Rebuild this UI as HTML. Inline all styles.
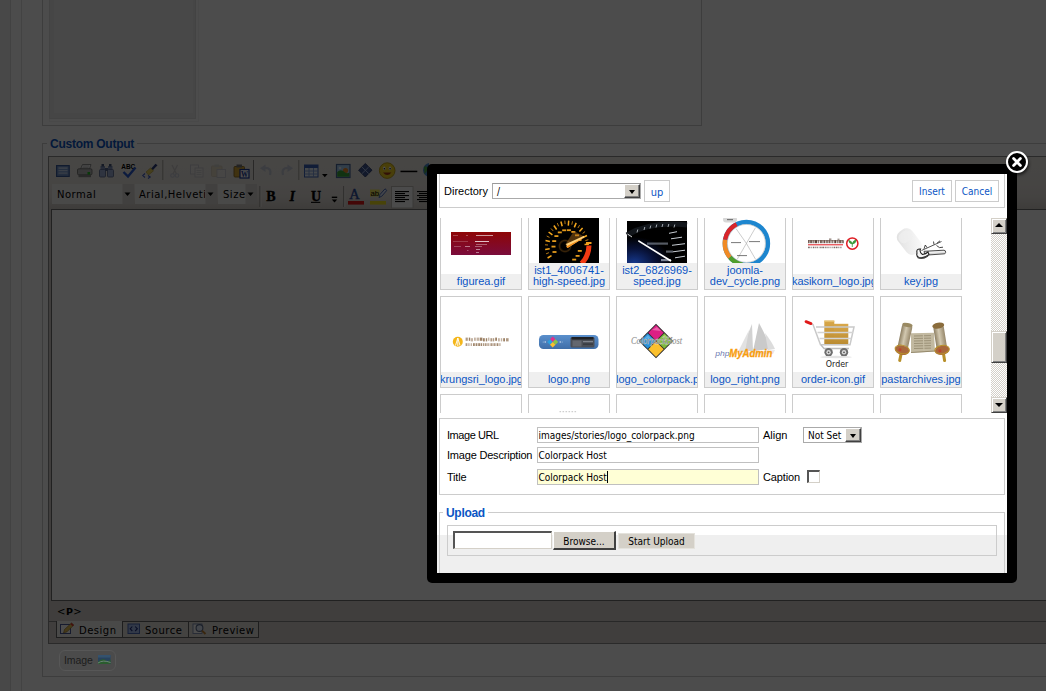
<!DOCTYPE html>
<html><head><meta charset="utf-8"><title>Custom Output</title>
<style>
html,body{margin:0;padding:0}
body{width:1046px;height:691px;overflow:hidden;background:#fff;position:relative;font-family:"Liberation Sans",Arial,sans-serif;font-size:11px;color:#333}
.a{position:absolute;box-sizing:border-box}
.tah{font-family:"DejaVu Sans Condensed","DejaVu Sans",sans-serif;font-size:10px;color:#000}
.ver{font-family:"DejaVu Sans",sans-serif;font-size:10px;letter-spacing:.5px;color:#000}
/* page under overlay */
#page{left:0;top:0;width:1046px;height:691px}
#ov{left:0;top:0;width:1046px;height:691px;background:rgba(0,0,0,.7)}
legend,.lg{color:#0b55c4;font-weight:bold;font-size:12px;background:#fff;padding:0 3px;white-space:nowrap}
/* modal */
#mb{left:427px;top:164px;width:590px;height:419px;background:#000;border-radius:5px}
#mc{left:437px;top:174px;width:570px;height:399px;background:#fff;overflow:hidden}
.fs{border:1px solid #ccc}
.btn{border:1px solid #ccc;background:#fff;color:#0b55c4;text-align:center}
.it{width:82px;height:92px;border:1px solid #ccc;background:#fff;overflow:hidden}
.it .nm{position:absolute;left:0;bottom:0;width:80px;background:#efefef;color:#0b55c4;text-align:center;font-size:11px;line-height:11px;white-space:nowrap;padding:2px 0 2px}
.inp{border:1px solid #c0c0c0;background:#fff;height:16px;line-height:16px;padding-left:.5px;white-space:nowrap}

.cb{background:#d4d0c8;border:1px solid #fff;border-right-color:#404040;border-bottom-color:#404040;box-shadow:inset -1px -1px 0 #808080}
.cb i{position:absolute;left:4px;top:5px;width:0;height:0;border-left:3.5px solid transparent;border-right:3.5px solid transparent;border-top:4px solid #000}
.wb{background:#d4d0c8;border:1px solid #fff;border-right:2px solid #404040;border-bottom:2px solid #404040}
#cl{left:1006px;top:151px;width:22px;height:22px;border-radius:11px;background:#000;border:2px solid #fff;box-shadow:1px 2px 3px rgba(0,0,0,.6)}

.sbb{background:#d4d0c8;border:1px solid #d4d0c8;border-right-color:#404040;border-bottom-color:#404040;box-shadow:inset 1px 1px 0 #fff,inset -1px -1px 0 #808080}
.sbb i{position:absolute;left:3px;width:0;height:0;border-left:4px solid transparent;border-right:4px solid transparent}
.sbb i.up{top:4px;border-bottom:4px solid #000}
.sbb i.dn{top:5px;border-top:4px solid #000}
</style></head><body>
<div id="page" class="a">
  <!-- left stripes -->
  <div class="a" style="left:0;top:0;width:10px;height:691px;background:#f0f0f0"></div>
  <div class="a" style="left:10px;top:0;width:1px;height:691px;background:#dcdcdc"></div>
  <div class="a" style="left:21px;top:0;width:1px;height:691px;background:#e2e2e2"></div>
  <!-- fieldset 1 -->
  <div class="a" style="left:42px;top:-10px;width:660px;height:136px;border:1px solid #ccc"></div>
  <div class="a" style="left:49px;top:-10px;width:150px;height:132px;border:1px solid #f4f4f4;background:#fdfdfd"></div>
  <div class="a" style="left:49px;top:-10px;width:147px;height:129px;border:1px solid #e2e2e2;background:#eaeaea"></div>
  <div class="a" style="left:54px;top:-10px;width:139px;height:123px;background:#f0f0f0"></div>
  <!-- fieldset 2 -->
  <div class="a" style="left:42px;top:143px;width:1100px;height:534px;border:1px solid #ccc"></div>
  <div class="a lg" style="left:47px;top:137px;height:14px;line-height:14px;letter-spacing:-.25px">Custom Output</div>

  <!-- editor -->
  <div class="a" style="left:48px;top:156px;width:1100px;height:488px;border:1px solid #8c8c8c;background:#d5d0cb"></div>
  <div class="a" style="left:51px;top:209px;width:1100px;height:392px;border:1px solid #6e6e6e;background:#fff"></div>
  <div class="a" style="left:49px;top:621px;width:1100px;height:1px;background:#888"></div>
  <div class="a" style="left:49px;top:601px;width:1100px;height:20px;background:#d5d0cb"></div>
  <div class="a" style="left:57px;top:605px;font:10px 'DejaVu Sans',sans-serif;color:#000;letter-spacing:.5px;line-height:13px">&lt;<b style="font-size:9.5px">P</b>&gt;</div>
  <!-- tabs -->
  <div class="a ver" style="left:56px;top:621px;width:67px;height:17px;border:1px solid #666;border-top:none;background:#f6f4f1;line-height:19px;padding-left:22px">Design</div>
  <div class="a ver" style="left:122px;top:621px;width:67px;height:17px;border:1px solid #666;background:#e3dfda;line-height:17px;padding-left:22px">Source</div>
  <div class="a ver" style="left:188px;top:621px;width:71px;height:17px;border:1px solid #666;background:#e3dfda;line-height:17px;padding-left:23px">Preview</div>
  <svg class="a" style="left:56px;top:621px" width="210" height="18" viewBox="56 621 210 18">
  <rect x="60.5" y="624.5" width="10" height="9" fill="#fdfdfd" stroke="#4a5a9a" stroke-width="1"/><path d="M63.5 633 L64.5 629.5 L71.5 623 L73.8 625 L67 631.8 Z" fill="#e8c050" stroke="#8a6a20" stroke-width=".6"/><path d="M71.5 623 L73.8 625 L72.6 626.2 L70.4 624.1 Z" fill="#e03030"/>
  <rect x="128" y="624" width="11.5" height="9.5" fill="#a8c0f0" stroke="#4a6ab8" stroke-width="1"/><path d="M132.3 626.5 L130.2 628.8 L132.3 631 M135.2 626.5 L137.3 628.8 L135.2 631" fill="none" stroke="#1a2a7a" stroke-width="1.1"/>
  <rect x="193" y="624" width="9" height="9.5" fill="#fdfdfd" stroke="#7a8ab0" stroke-width=".9"/><circle cx="199.5" cy="628" r="3.4" fill="#dfeafc" stroke="#5a6a8a" stroke-width="1.1"/><path d="M202 630.6 L205.5 634" stroke="#c08030" stroke-width="2"/>
  </svg>
  <div class="a" style="left:49px;top:157px;width:1100px;height:52px;background:linear-gradient(#eeeae5 0,#ebe7e2 26px,#e4dfda 40px,#cfcac4 52px)"></div>
  <!-- toolbar dropdowns -->
  <div class="a ver" style="left:52px;top:184px;width:82px;height:20px;background:#f6f4f1;line-height:22px;padding-left:5px">Normal</div>
  <div class="a" style="left:122px;top:184px;width:12px;height:20px;background:#dad7d3;border-left:1px solid #e8e5e1"></div>
  <div class="a ver" style="left:135px;top:184px;width:82px;height:20px;background:#f6f4f1;line-height:22px;padding-left:4px">Arial,Helveti</div>
  <div class="a" style="left:205px;top:184px;width:12px;height:20px;background:#dad7d3;border-left:1px solid #e8e5e1"></div>
  <div class="a ver" style="left:218px;top:184px;width:39px;height:20px;background:#f6f4f1;line-height:22px;padding-left:5px">Size</div>
  <div class="a" style="left:245px;top:184px;width:12px;height:20px;background:#dad7d3;border-left:1px solid #e8e5e1"></div>
  <!-- toolbar icons -->
  <svg class="a" id="tb" style="left:49px;top:157px" width="380" height="52" viewBox="49 157 380 52"><rect x="56.6" y="165.6" width="12.6" height="10.8" fill="#7a9ad0" stroke="#3a5a9a" stroke-width="1.2"/><rect x="58.5" y="167.5" width="9" height="1.2" fill="#dbe6f6"/><rect x="58.5" y="170" width="9" height="1.2" fill="#c4d4ee"/><rect x="58.5" y="172.5" width="9" height="1.2" fill="#c4d4ee"/><path d="M80.5 169 L82.5 164.5 L91 164.5 L89.5 169 Z" fill="#f4f4f4" stroke="#7a7a7a" stroke-width=".8"/><rect x="77.5" y="168.8" width="14.5" height="6" rx="1.2" fill="#b8b8b8" stroke="#6a6a6a" stroke-width=".8"/><rect x="78.5" y="174" width="12.5" height="3.2" fill="#8a8a8a"/><rect x="87.5" y="172" width="2.6" height="2.6" fill="#22c022"/><path d="M83 166 L89 166 M82.5 167.5 L88.5 167.5" stroke="#aaa" stroke-width=".6"/><rect x="100.5" y="166" width="4.5" height="4" fill="#8092ba"/><rect x="108" y="166" width="4.5" height="4" fill="#8092ba"/><rect x="101.5" y="164" width="2.5" height="2.5" fill="#45557a"/><rect x="109" y="164" width="2.5" height="2.5" fill="#45557a"/><rect x="99.5" y="169.5" width="6" height="7.5" rx="1" fill="#9fb0d6" stroke="#55658a" stroke-width=".8"/><rect x="107.5" y="169.5" width="6" height="7.5" rx="1" fill="#9fb0d6" stroke="#55658a" stroke-width=".8"/><rect x="105" y="168" width="3" height="3" fill="#55668c"/><text x="121.3" y="169.3" font-family="Liberation Sans,sans-serif" font-size="6.5" font-weight="bold" fill="#000" textLength="14" lengthAdjust="spacingAndGlyphs">ABC</text><path d="M123.5 172 L128 176.5 L135.5 167.5" fill="none" stroke="#2a5ad0" stroke-width="2.4"/><path d="M155.5 163.8 L157.5 165.2 L152.5 170.5 L150.8 169 Z" fill="#2a3a7a"/><path d="M150.5 168 L153.5 170.8 L148.5 175 L146 172 Z" fill="#e8d060" stroke="#b09a30" stroke-width=".6"/><path d="M145 173.5 L142.8 175.5 L145 177.5 M148 175.5 L150.2 177 L148 178.5" fill="none" stroke="#3a5ac0" stroke-width="1.1"/><rect x="162.5" y="160" width="1" height="20" fill="#8a8782"/><rect x="163.5" y="160" width="1" height="20" fill="#efece8"/><g opacity=".2"><path d="M172 165 L176.5 174 M177.5 165 L173 174" stroke="#556" stroke-width="1.2"/><circle cx="172.5" cy="175.5" r="1.8" fill="none" stroke="#3a5ab0" stroke-width="1.1"/><circle cx="177" cy="175.5" r="1.8" fill="none" stroke="#3a5ab0" stroke-width="1.1"/><rect x="190.5" y="165" width="8" height="9" fill="#fff" stroke="#4a5a8a" stroke-width=".9"/><rect x="195" y="168" width="8" height="9" fill="#fff" stroke="#4a5a8a" stroke-width=".9"/><path d="M196.5 170.5 H201.5 M196.5 172.5 H201.5 M196.5 174.5 H201.5" stroke="#4a5a8a" stroke-width=".7"/><rect x="211.5" y="166" width="10.5" height="10.5" rx="1" fill="#d8b050" stroke="#8a6a20" stroke-width=".9"/><rect x="214.5" y="164.5" width="4.5" height="2.5" fill="#888"/><rect x="217" y="169.5" width="8.5" height="8" fill="#fff" stroke="#4a5a8a" stroke-width=".9"/><path d="M270 175 Q272 167.5 264.5 168" fill="none" stroke="#3a5ab0" stroke-width="2.2"/><path d="M265.5 164.5 L260 168.2 L265.5 172 Z" fill="#3a5ab0"/><path d="M283 175 Q281 167.5 288.5 168" fill="none" stroke="#3a5ab0" stroke-width="2.2"/><path d="M287.5 164.5 L293 168.2 L287.5 172 Z" fill="#3a5ab0"/></g><rect x="234" y="166.5" width="10.5" height="10.5" rx="1" fill="#d8a838" stroke="#8a6a20" stroke-width=".9"/><rect x="236.5" y="164.5" width="5.5" height="3" fill="#777"/><rect x="240" y="169.5" width="9" height="8.5" fill="#fff" stroke="#1a3a9a" stroke-width="1.2"/><text x="241" y="177" font-family="Liberation Serif,serif" font-weight="bold" font-size="8" fill="#1a3a9a" textLength="7" lengthAdjust="spacingAndGlyphs">W</text><rect x="253" y="160" width="1" height="20" fill="#8a8782"/><rect x="254" y="160" width="1" height="20" fill="#efece8"/><rect x="298.5" y="160" width="1" height="20" fill="#8a8782"/><rect x="299.5" y="160" width="1" height="20" fill="#efece8"/><rect x="304.5" y="165" width="13.5" height="12" fill="#e8f0fc" stroke="#3a62b8" stroke-width="1"/><rect x="304.5" y="165" width="13.5" height="3" fill="#3a62b8"/><path d="M309 168 V177 M313.5 168 V177 M304.5 171 H318 M304.5 174 H318" stroke="#7a9ad8" stroke-width=".9"/><path d="M322 174 L327.6 174 L324.8 177.2 Z" fill="#000"/><rect x="336.5" y="164.5" width="13.5" height="13" fill="#a8d0f4" stroke="#4a6a9a" stroke-width="1.2"/><circle cx="345.5" cy="170.5" r="2.6" fill="#f08a2a"/><path d="M337.2 176.8 L337.2 172 Q341 168.5 345 172.5 Q347.5 174 349.4 172.5 L349.4 176.8 Z" fill="#3aa83a"/><circle cx="340" cy="168" r="1.3" fill="#fff" opacity=".8"/><path d="M365.3 163.5 L372 170.2 L365.3 177 L358.6 170.2 Z" fill="#3f5590" stroke="#2a3a6a" stroke-width=".9"/><path d="M362 167 L368.7 173.6 M368.7 167 L362 173.6" stroke="#b0c4ec" stroke-width=".9"/><circle cx="387.2" cy="170.6" r="7.8" fill="#f4d424" stroke="#b89a10" stroke-width=".9"/><ellipse cx="384.3" cy="168.3" rx="1.3" ry="1.9" fill="#fff"/><ellipse cx="390" cy="168.3" rx="1.3" ry="1.9" fill="#fff"/><circle cx="384.4" cy="168.8" r=".8" fill="#222"/><circle cx="390.1" cy="168.8" r=".8" fill="#222"/><path d="M383 172.5 Q387.2 177.5 391.5 172.5 Z" fill="#a8381a"/><rect x="400.5" y="170.7" width="16.8" height="1.5" fill="#000"/><circle cx="430" cy="170" r="7" fill="#4a8ad0"/><path d="M424 167 Q427 165 428 169 Q426 173 424.5 174" fill="#4aa84a"/><rect x="259.5" y="186" width="1" height="21" fill="#8a8782"/><rect x="260.5" y="186" width="1" height="21" fill="#efece8"/><text x="266.3" y="200.6" font-family="Liberation Serif,serif" font-weight="bold" font-size="14" fill="#000" stroke="#000" stroke-width=".35">B</text><text x="289.6" y="200.6" font-family="Liberation Serif,serif" font-weight="bold" font-style="italic" font-size="14" fill="#000" stroke="#000" stroke-width=".35">I</text><text x="311" y="200.6" font-family="Liberation Serif,serif" font-weight="bold" font-size="14" fill="#000" stroke="#000" stroke-width=".35">U</text><rect x="311" y="201.8" width="9.3" height="1.1" fill="#000"/><rect x="331.8" y="196.6" width="5.4" height="1.4" fill="#000"/><path d="M331.8 199.4 L337.2 199.4 L334.5 202.6 Z" fill="#000"/><rect x="343.3" y="186" width="1" height="21" fill="#8a8782"/><rect x="344.3" y="186" width="1" height="21" fill="#efece8"/><text x="349.2" y="199.3" font-family="Liberation Serif,serif" font-size="14.5" fill="#2a4a9a" stroke="#2a4a9a" stroke-width=".4">A</text><rect x="348" y="201" width="16" height="3.6" fill="#e01818"/><rect x="370" y="189.5" width="9.6" height="7" fill="#f4ec60"/><text x="370.4" y="196" font-family="Liberation Sans,sans-serif" font-size="8" fill="#000" textLength="8.6" lengthAdjust="spacingAndGlyphs">ab</text><path d="M379 197.5 L380 194.5 L385 188.8 L386.8 190.4 L381.8 196.2 Z" fill="#dfe8fa" stroke="#3a5ab0" stroke-width=".9"/><rect x="370" y="201" width="16" height="3.6" fill="#f0e020"/><rect x="391.5" y="186.5" width="21.5" height="21.5" fill="#fcfcfc" stroke="#c0bcb6" stroke-width="1"/><rect x="395" y="191" width="14" height="1.1" fill="#000"/><rect x="417.0" y="191" width="14" height="1.1" fill="#000"/><rect x="395" y="193" width="10" height="1.1" fill="#000"/><rect x="419.0" y="193" width="10" height="1.1" fill="#000"/><rect x="395" y="195" width="14" height="1.1" fill="#000"/><rect x="417.0" y="195" width="14" height="1.1" fill="#000"/><rect x="395" y="197" width="10" height="1.1" fill="#000"/><rect x="419.0" y="197" width="10" height="1.1" fill="#000"/><rect x="395" y="199" width="14" height="1.1" fill="#000"/><rect x="417.0" y="199" width="14" height="1.1" fill="#000"/><rect x="395" y="201" width="10" height="1.1" fill="#000"/><rect x="419.0" y="201" width="10" height="1.1" fill="#000"/><path d="M124.5 192.5 L130.5 192.5 L127.5 196 Z" fill="#000"/><path d="M207.5 192.5 L213.5 192.5 L210.5 196 Z" fill="#000"/><path d="M247.5 192.5 L253.5 192.5 L250.5 196 Z" fill="#000"/></svg>
</div>
<div id="ov" class="a"></div>
<div class="a" style="left:59px;top:650px;width:57px;height:21px;border:1px solid #575757;border-radius:6px;background:#4b4b4b;line-height:19px;padding-left:4px;font-size:10.5px;color:#1c1c1c;letter-spacing:-.1px">Image</div>
<svg class="a" style="left:97px;top:654px" width="15" height="11" viewBox="97 654 15 11"><rect x="98" y="655" width="12.5" height="9" fill="#28425c"/><path d="M98 662 Q102 657.5 106 660.5 Q108.5 662 110.5 659.5 L110.5 664 L98 664 Z" fill="#2a5c2e"/><path d="M98 663 Q103 659.5 110.5 662.5" stroke="#7a8a8a" stroke-width=".8" fill="none"/><rect x="98" y="655" width="12.5" height="2.6" fill="#34526e"/></svg>
<div id="mb" class="a"></div>
<div id="mc" class="a">
<div class="a fs" style="left:2px;top:-1px;width:566px;height:35px"></div>
<div class="a" style="left:7px;top:11px;font-size:11px;color:#000">Directory</div>
<div class="a tah" style="left:55px;top:9px;width:149px;height:16px;border:1px solid #aaa;border-top-color:#999;background:#fff;line-height:15px;padding-left:4px">/</div>
<div class="a cb" style="left:187px;top:10px;width:16px;height:14px"><i></i></div>
<div class="a btn tah" style="left:207px;top:6px;width:26px;height:22px;line-height:23px;color:#0b55c4;font-size:11px">up</div>
<div class="a btn tah" style="left:475px;top:6px;width:40px;height:22px;line-height:21px;color:#0b55c4">Insert</div>
<div class="a btn tah" style="left:518px;top:6px;width:44px;height:22px;line-height:21px;color:#0b55c4">Cancel</div>
<div class="a" id="ifr" style="left:0;top:44px;width:570px;height:195px;overflow:hidden;background:#fff">
<div class="a it" id="it00" style="left:3px;top:-20px"><svg class="a" style="left:0;top:0" width="80" height="75" viewBox="441 199 80 75"><defs><linearGradient id="gfa" x1="0" y1="0" x2="0" y2="1"><stop offset="0" stop-color="#8e0606"/><stop offset="1" stop-color="#7a0c3c"/></linearGradient></defs><rect x="451" y="232" width="60" height="23" fill="url(#gfa)"/><rect x="453" y="235" width="5" height="1" fill="#fff" opacity="0.25"/><rect x="466" y="235" width="2" height="1" fill="#fff" opacity="0.3"/><rect x="476" y="235" width="17" height="1" fill="#fff" opacity="0.6"/><rect x="453" y="241" width="15" height="1" fill="#fff" opacity="0.2"/><rect x="475" y="241" width="14" height="1" fill="#fff" opacity="0.75"/><rect x="476" y="244" width="11" height="1" fill="#fff" opacity="0.35"/><rect x="454" y="246" width="7" height="1" fill="#fff" opacity="0.25"/><rect x="465" y="246" width="5" height="1" fill="#fff" opacity="0.45"/><rect x="475" y="246" width="7" height="1" fill="#fff" opacity="0.35"/><rect x="467" y="250" width="1.5" height="1" fill="#fff" opacity="0.3"/><rect x="476" y="249" width="4" height="1" fill="#fff" opacity="0.5"/><rect x="476" y="252" width="3" height="1" fill="#fff" opacity="0.45"/></svg><div class="nm">figurea.gif</div></div>
<div class="a it" id="it01" style="left:91px;top:-20px"><svg class="a" style="left:0;top:0" width="80" height="64" viewBox="529 199 80 64"><defs><radialGradient id="gsp" cx=".5" cy=".5" r=".5"><stop offset="0" stop-color="#000"/><stop offset=".55" stop-color="#000"/><stop offset=".8" stop-color="#3a2408"/><stop offset="1" stop-color="#000"/></radialGradient></defs><rect x="539" y="203" width="60" height="60" fill="#000"/><circle cx="565" cy="246" r="7" fill="url(#gsp)"/><line x1="551.5" y1="255.6" x2="547.6" y2="258.0" stroke="#f5a81e" stroke-width="1.5"/><line x1="548.9" y1="252.7" x2="546.1" y2="253.8" stroke="#b87a14" stroke-width="1"/><line x1="549.7" y1="248.7" x2="545.2" y2="249.4" stroke="#f5a81e" stroke-width="1.5"/><line x1="548.0" y1="245.0" x2="545.0" y2="244.8" stroke="#b87a14" stroke-width="1"/><line x1="549.9" y1="241.5" x2="545.5" y2="240.4" stroke="#f5a81e" stroke-width="1.5"/><line x1="549.5" y1="237.4" x2="546.7" y2="236.0" stroke="#b87a14" stroke-width="1"/><line x1="552.4" y1="234.8" x2="548.6" y2="232.0" stroke="#f5a81e" stroke-width="1.5"/><line x1="553.2" y1="230.9" x2="551.0" y2="228.5" stroke="#b87a14" stroke-width="1"/><line x1="556.6" y1="229.5" x2="553.9" y2="225.5" stroke="#f5a81e" stroke-width="1.5"/><line x1="558.6" y1="226.3" x2="557.3" y2="223.1" stroke="#b87a14" stroke-width="1"/><line x1="562.2" y1="226.3" x2="560.9" y2="221.5" stroke="#f5a81e" stroke-width="1.5"/><line x1="565.1" y1="224.1" x2="564.8" y2="220.6" stroke="#b87a14" stroke-width="1"/><line x1="568.3" y1="225.6" x2="568.7" y2="220.6" stroke="#f5a81e" stroke-width="1.5"/><line x1="571.8" y1="224.7" x2="572.5" y2="221.3" stroke="#b87a14" stroke-width="1"/><line x1="574.3" y1="227.4" x2="576.2" y2="222.9" stroke="#f5a81e" stroke-width="1.5"/><line x1="577.9" y1="228.0" x2="579.6" y2="225.1" stroke="#b87a14" stroke-width="1"/><line x1="579.4" y1="231.6" x2="582.6" y2="228.0" stroke="#f5a81e" stroke-width="1.5"/><line x1="582.6" y1="233.5" x2="585.1" y2="231.5" stroke="#b87a14" stroke-width="1"/><line x1="582.9" y1="237.5" x2="587.0" y2="235.5" stroke="#f5a81e" stroke-width="1.5"/><line x1="585.4" y1="240.6" x2="588.3" y2="239.7" stroke="#b87a14" stroke-width="1"/><line x1="584.5" y1="244.6" x2="588.9" y2="244.2" stroke="#f5a81e" stroke-width="1.5"/><rect x="552.5" y="251.1" width="4" height="1.8" fill="#e39a1c"/><rect x="551.5" y="245.7" width="4" height="1.8" fill="#e39a1c"/><rect x="552.2" y="240.2" width="4" height="1.8" fill="#e39a1c"/><rect x="554.4" y="235.2" width="4" height="1.8" fill="#e39a1c"/><rect x="557.8" y="231.5" width="4" height="1.8" fill="#e39a1c"/><rect x="562.2" y="229.4" width="4" height="1.8" fill="#e39a1c"/><rect x="566.9" y="229.3" width="4" height="1.8" fill="#e39a1c"/><rect x="571.3" y="231.0" width="4" height="1.8" fill="#e39a1c"/><rect x="575.0" y="234.4" width="4" height="1.8" fill="#e39a1c"/><rect x="577.5" y="239.1" width="4" height="1.8" fill="#e39a1c"/><rect x="577.8" y="250.0" width="4" height="1.8" fill="#e39a1c"/><rect x="575.6" y="255.0" width="4" height="1.8" fill="#e39a1c"/><rect x="572.2" y="258.7" width="4" height="1.8" fill="#e39a1c"/><path d="M589 245.5 A20 24 0 0 1 581.5 263.5" stroke="#f23a12" stroke-width="5" fill="none"/><rect x="586" y="242" width="5.5" height="2" fill="#f0a020"/><path d="M565 245 L574 231 L584 236.5 Z" fill="#a06418" opacity=".5"/><path d="M566 244 L584 235.7 L584.3 237.4 L567.5 248 Z" fill="#ffd27a"/><path d="M566 246.5 L584.3 237.4 L567.5 248 Z" fill="#f08a18"/></svg><div class="nm">ist1_4006741-<br>high-speed.jpg</div></div>
<div class="a it" id="it02" style="left:179px;top:-20px"><svg class="a" style="left:0;top:0" width="80" height="64" viewBox="617 199 80 64"><defs><radialGradient id="gs2" cx=".12" cy="1" r=".62"><stop offset="0" stop-color="#16388c"/><stop offset=".55" stop-color="#081238"/><stop offset="1" stop-color="#000"/></radialGradient></defs><rect x="627" y="221" width="60" height="42" fill="url(#gs2)"/><path d="M627 235 Q650 221 687 225" stroke="#12161b" stroke-width="5" fill="none"/><line x1="637" y1="232.5" x2="637.8" y2="229.5" stroke="#cfd6de" stroke-width=".9" opacity=".85"/><line x1="644" y1="230.0" x2="644.8" y2="227.0" stroke="#cfd6de" stroke-width=".9" opacity=".85"/><line x1="650" y1="228.5" x2="650.8" y2="225.5" stroke="#cfd6de" stroke-width=".9" opacity=".85"/><line x1="656" y1="227.5" x2="656.8" y2="224.5" stroke="#cfd6de" stroke-width=".9" opacity=".85"/><line x1="662" y1="227.0" x2="662.8" y2="224.0" stroke="#cfd6de" stroke-width=".9" opacity=".85"/><line x1="668" y1="227.0" x2="668.8" y2="224.0" stroke="#cfd6de" stroke-width=".9" opacity=".85"/><line x1="674" y1="227.5" x2="674.8" y2="224.5" stroke="#cfd6de" stroke-width=".9" opacity=".85"/><line x1="627.5" y1="234" x2="632" y2="237" stroke="#e8e8e8" stroke-width=".9"/><line x1="669" y1="233.3" x2="677" y2="231.7" stroke="#dfe5ec" stroke-width="1" opacity=".9"/><line x1="671" y1="238.8" x2="682" y2="237.2" stroke="#dfe5ec" stroke-width="1" opacity=".9"/><line x1="672" y1="245.3" x2="685" y2="243.7" stroke="#dfe5ec" stroke-width="1" opacity=".9"/><line x1="673" y1="251.8" x2="685" y2="250.2" stroke="#dfe5ec" stroke-width="1" opacity=".9"/><line x1="675" y1="257.8" x2="685" y2="256.2" stroke="#dfe5ec" stroke-width="1" opacity=".9"/><rect x="647" y="242.5" width="21" height="2.2" fill="#9aa4b4" opacity="0.55"/><rect x="666" y="250.5" width="7" height="2.2" fill="#9aa4b4" opacity="0.6"/><rect x="661" y="259" width="10" height="2.2" fill="#9aa4b4" opacity="0.8"/><path d="M638.6 240 L671.5 260.3 L670.6 261.8 L638 241.6 Z" fill="#fff"/></svg><div class="nm">ist2_6826969-<br>speed.jpg</div></div>
<div class="a it" id="it03" style="left:267px;top:-20px"><svg class="a" style="left:0;top:0" width="80" height="64" viewBox="705 199 80 64"><circle cx="746.4" cy="243.4" r="21.5" fill="none" stroke="#1d86cf" stroke-width="4.5"/><path d="M742.7 264.6 A21.5 21.5 0 0 1 729.9 257.2" stroke="#4f9d2d" stroke-width="4.5" fill="none"/><path d="M729.9 257.2 A21.5 21.5 0 0 1 725.2 239.7" stroke="#f08a24" stroke-width="4.5" fill="none"/><path d="M725.2 239.7 A21.5 21.5 0 0 1 736.6 224.2" stroke="#d9252a" stroke-width="4.5" fill="none"/><circle cx="746.4" cy="243.4" r="19" fill="none" stroke="#bbb" stroke-width=".6"/><line x1="746.4" y1="243.4" x2="736.1" y2="228.7" stroke="#999" stroke-width=".5"/><line x1="746.4" y1="243.4" x2="755.4" y2="227.8" stroke="#999" stroke-width=".5"/><line x1="746.4" y1="243.4" x2="737.4" y2="259.0" stroke="#999" stroke-width=".5"/><line x1="746.4" y1="243.4" x2="755.4" y2="259.0" stroke="#999" stroke-width=".5"/><rect x="731" y="242" width="10" height="1.1" fill="#333" opacity=".6"/><rect x="749" y="241" width="11" height="1.1" fill="#333" opacity=".6"/><rect x="737" y="255" width="10" height="1.1" fill="#333" opacity=".6"/><rect x="723" y="216.5" width="14" height="6" rx="3" fill="#d8d8d8"/><rect x="727" y="219" width="6" height="1.2" fill="#777"/></svg><div class="nm">joomla-<br>dev_cycle.png</div></div>
<div class="a it" id="it04" style="left:355px;top:-20px"><svg class="a" style="left:0;top:0" width="80" height="75" viewBox="793 199 80 75"><rect x="808.0" y="240.2" width="1.6" height="3" fill="#4a2e22" opacity="0.75"/><rect x="810.1" y="240.2" width="2.4" height="3" fill="#4a2e22" opacity="0.75"/><rect x="813.0" y="240.2" width="1.2" height="3" fill="#4a2e22" opacity="0.6"/><rect x="814.7" y="240.2" width="2.4" height="3" fill="#4a2e22" opacity="0.9"/><rect x="817.8" y="240.2" width="1.2" height="3" fill="#4a2e22" opacity="0.6"/><rect x="819.9" y="240.2" width="2.0" height="3" fill="#4a2e22" opacity="0.75"/><rect x="822.4" y="240.2" width="1.2" height="3" fill="#4a2e22" opacity="0.75"/><rect x="824.1" y="240.2" width="1.2" height="3" fill="#4a2e22" opacity="0.9"/><rect x="826.0" y="240.2" width="2.0" height="3" fill="#4a2e22" opacity="0.6"/><rect x="828.5" y="240.2" width="2.0" height="3" fill="#4a2e22" opacity="0.75"/><rect x="831.4" y="240.2" width="2.0" height="3" fill="#4a2e22" opacity="0.6"/><rect x="834.3" y="240.2" width="2.0" height="3" fill="#4a2e22" opacity="0.9"/><rect x="837.0" y="240.2" width="1.6" height="3" fill="#4a2e22" opacity="0.6"/><rect x="839.1" y="240.2" width="2.4" height="3" fill="#4a2e22" opacity="0.75"/><rect x="842.0" y="240.2" width="2.0" height="3" fill="#4a2e22" opacity="0.6"/><rect x="808" y="240.2" width="35" height=".9" fill="#4a2e22" opacity=".55"/><rect x="829" y="238.4" width="2.4" height="1.6" fill="#4a2e22" opacity=".5"/><rect x="837.5" y="238.6" width="2" height="1.4" fill="#4a2e22" opacity=".5"/><rect x="808" y="244.3" width="35" height="1" fill="#e01b22"/><rect x="808.0" y="246.7" width="1.8" height="1.5" fill="#5a4a45" opacity="0.8"/><rect x="810.5" y="246.7" width="1.8" height="1.5" fill="#5a4a45" opacity="0.5"/><rect x="813.0" y="246.7" width="1.4" height="1.5" fill="#5a4a45" opacity="0.8"/><rect x="815.1" y="246.7" width="1.4" height="1.5" fill="#5a4a45" opacity="0.65"/><rect x="817.0" y="246.7" width="1.0" height="1.5" fill="#5a4a45" opacity="0.65"/><rect x="818.7" y="246.7" width="1.0" height="1.5" fill="#5a4a45" opacity="0.5"/><rect x="820.2" y="246.7" width="1.4" height="1.5" fill="#5a4a45" opacity="0.8"/><rect x="822.3" y="246.7" width="1.8" height="1.5" fill="#5a4a45" opacity="0.8"/><rect x="824.8" y="246.7" width="1.8" height="1.5" fill="#5a4a45" opacity="0.65"/><rect x="827.1" y="246.7" width="1.8" height="1.5" fill="#5a4a45" opacity="0.5"/><rect x="829.4" y="246.7" width="1.4" height="1.5" fill="#5a4a45" opacity="0.5"/><rect x="831.5" y="246.7" width="1.4" height="1.5" fill="#5a4a45" opacity="0.5"/><rect x="833.6" y="246.7" width="1.4" height="1.5" fill="#5a4a45" opacity="0.8"/><rect x="835.7" y="246.7" width="1.8" height="1.5" fill="#5a4a45" opacity="0.8"/><rect x="838.0" y="246.7" width="1.4" height="1.5" fill="#5a4a45" opacity="0.5"/><rect x="839.9" y="246.7" width="1.8" height="1.5" fill="#5a4a45" opacity="0.5"/><circle cx="852.3" cy="243.6" r="5.6" fill="#fff" stroke="#e01b22" stroke-width="1.5"/><path d="M852.3 247 L852.3 243.5 M852.3 244 Q849 243.5 848.8 240.5 Q852 241 852.3 244 Q853 240.5 856 240 Q856 243.5 852.3 244" fill="#3a9a3a" stroke="#3a9a3a" stroke-width=".8"/></svg><div class="nm" style="text-indent:-1px;letter-spacing:-.05px">kasikorn_logo.jpg</div></div>
<div class="a it" id="it05" style="left:443px;top:-20px"><svg class="a" style="left:0;top:0" width="80" height="75" viewBox="881 199 80 75"><defs><linearGradient id="gk" x1="0" y1="0" x2="1" y2="1"><stop offset="0" stop-color="#dedede"/><stop offset=".45" stop-color="#ececec"/><stop offset="1" stop-color="#fbfbfb"/></linearGradient></defs><g transform="rotate(-38 909 241.5)"><rect x="900.5" y="228" width="17.5" height="27.5" rx="7" fill="url(#gk)"/><rect x="902" y="230" width="14" height="11" rx="5" fill="#f0f0f0" opacity=".7"/></g><path d="M924 251.3 L944 250.2 Q946 250.4 945.6 252.6 L944.8 253.8 L925 255.2 Z" fill="#d8d8d8" stroke="#3a3a3a" stroke-width=".9"/><path d="M926 252.6 L944.5 251.6" stroke="#fff" stroke-width=".8"/><path d="M921.5 250.5 L941.5 241.5" stroke="#555" stroke-width="1"/><path d="M924 248.8 L925.3 245 L927 247.6 M934 244.5 L933.5 241.5 M937 243.2 L940 240.8 M936.5 245.5 L939.5 247.6 L943 247.2" stroke="#333" stroke-width=".9" fill="none"/><path d="M917 253 Q916 248.5 920.5 249 Q919 252 922.5 254.5 Q926 254 928 252 L929 254.5 Q924 259 919 257.5 Q916 256.5 917 253 Z" fill="#f4f4f4" stroke="#222" stroke-width="1.1"/><path d="M917.5 257.5 Q922 260 928 256" stroke="#444" stroke-width="1.2" fill="none"/></svg><div class="nm">key.jpg</div></div>
<div class="a it" id="it10" style="left:3px;top:78px"><svg class="a" style="left:0;top:0" width="80" height="75" viewBox="441 297 80 75"><circle cx="457.8" cy="341.8" r="5" fill="#f4b61a"/><path d="M457.8 338 L455.5 345.5 M457.8 338 L460 345.5 M457.8 338 L457.8 346" stroke="#fff" stroke-width=".9" fill="none"/><rect x="465.6" y="337.6" width="2.2" height="3.2" fill="#7a5530" opacity="0.6"/><rect x="468.8" y="337.6" width="1.4" height="3.2" fill="#7a5530" opacity="0.75"/><rect x="470.8" y="338.2" width="2.2" height="3.2" fill="#7a5530" opacity="0.45"/><rect x="474.0" y="337.6" width="1.8" height="3.2" fill="#7a5530" opacity="0.45"/><rect x="476.6" y="337.6" width="2.6" height="3.2" fill="#7a5530" opacity="0.45"/><rect x="479.8" y="337.6" width="2.6" height="3.2" fill="#7a5530" opacity="0.75"/><rect x="483.0" y="338.2" width="1.8" height="3.2" fill="#7a5530" opacity="0.75"/><rect x="485.8" y="338.2" width="1.4" height="3.2" fill="#7a5530" opacity="0.75"/><rect x="488.0" y="337.6" width="1.4" height="3.2" fill="#7a5530" opacity="0.45"/><rect x="490.4" y="338.2" width="1.8" height="3.2" fill="#7a5530" opacity="0.6"/><rect x="492.8" y="338.2" width="1.4" height="3.2" fill="#7a5530" opacity="0.6"/><rect x="495.2" y="337.6" width="1.8" height="3.2" fill="#7a5530" opacity="0.75"/><rect x="498.0" y="338.2" width="1.8" height="3.2" fill="#7a5530" opacity="0.45"/><rect x="500.8" y="338.2" width="1.4" height="3.2" fill="#7a5530" opacity="0.45"/><rect x="503.2" y="338.2" width="1.8" height="3.2" fill="#7a5530" opacity="0.75"/><rect x="506.0" y="338.2" width="2.6" height="3.2" fill="#7a5530" opacity="0.6"/><rect x="465.6" y="343.2" width="1.8" height="2.8" fill="#7a5530" opacity="0.6"/><rect x="468.2" y="343.2" width="1.4" height="2.8" fill="#7a5530" opacity="0.45"/><rect x="470.6" y="343.2" width="1.4" height="2.8" fill="#7a5530" opacity="0.45"/><rect x="473.0" y="343.2" width="1.8" height="2.8" fill="#7a5530" opacity="0.7"/><rect x="475.6" y="343.2" width="1.8" height="2.8" fill="#7a5530" opacity="0.7"/><rect x="478.2" y="343.2" width="1.8" height="2.8" fill="#7a5530" opacity="0.7"/><rect x="480.6" y="343.2" width="1.4" height="2.8" fill="#7a5530" opacity="0.7"/><rect x="482.8" y="343.2" width="1.4" height="2.8" fill="#7a5530" opacity="0.6"/><rect x="484.8" y="343.2" width="1.8" height="2.8" fill="#7a5530" opacity="0.6"/><rect x="487.2" y="343.2" width="2.2" height="2.8" fill="#7a5530" opacity="0.45"/><rect x="490.4" y="343.2" width="2.2" height="2.8" fill="#7a5530" opacity="0.6"/><rect x="493.4" y="343.2" width="2.2" height="2.8" fill="#7a5530" opacity="0.6"/><rect x="496.6" y="343.2" width="1.8" height="2.8" fill="#7a5530" opacity="0.7"/><rect x="499.2" y="343.2" width="1.4" height="2.8" fill="#7a5530" opacity="0.45"/></svg><div class="nm" style="text-indent:-1px;letter-spacing:-.05px">krungsri_logo.jpg</div></div>
<div class="a it" id="it11" style="left:91px;top:78px"><svg class="a" style="left:0;top:0" width="80" height="75" viewBox="529 297 80 75"><defs><linearGradient id="gl" x1="0" y1="0" x2="0" y2="1"><stop offset="0" stop-color="#5a8fcc"/><stop offset="1" stop-color="#3f6ea8"/></linearGradient></defs><rect x="539" y="335" width="59.5" height="14" rx="4.5" fill="url(#gl)"/><g transform="translate(552.7 342)"><path d="M0 -5.5 L2.75 -2.75 L0 0 L-2.75 -2.75 Z" fill="#e0308a"/><path d="M-2.75 -2.75 L0 0 L-2.75 2.75 L-5.5 0 Z" fill="#2aa0e0"/><path d="M2.75 -2.75 L5.5 0 L2.75 2.75 L0 0 Z" fill="#8bc34a"/><path d="M0 0 L2.75 2.75 L0 5.5 L-2.75 2.75 Z" fill="#fbc02d"/><circle cx="-7.5" cy="0" r=".7" fill="#dfe8f5"/><circle cx="-9.5" cy="0" r=".5" fill="#dfe8f5" opacity=".7"/><circle cx="7.5" cy="0" r=".7" fill="#dfe8f5"/><circle cx="9.5" cy="0" r=".5" fill="#dfe8f5" opacity=".7"/></g><rect x="570.5" y="337" width="24" height="10.5" rx="1.5" fill="#4a4e56"/><rect x="571.5" y="337" width="22" height="2.6" rx="1" fill="#1e2024"/><rect x="572.5" y="340.5" width="9" height="6" fill="#63676f"/><rect x="583" y="341" width="10" height="1.2" fill="#7e838c"/><rect x="583" y="343.5" width="10" height="1.2" fill="#33363c"/></svg><div class="nm">logo.png</div></div>
<div class="a it" id="it12" style="left:179px;top:78px"><svg class="a" style="left:0;top:0" width="80" height="75" viewBox="617 297 80 75"><g transform="translate(656 341)"><path d="M0 -17.3 L17.3 0 L0 17.3 L-17.3 0 Z" fill="#2a2a2a"/><path d="M0 -16 L7.7 -8.3 L0 -.6 L-7.7 -8.3 Z" fill="#dc1f84"/><path d="M-8.3 -7.7 L-.6 0 L-8.3 7.7 L-16 0 Z" fill="#2a8fd6"/><path d="M8.3 -7.7 L16 0 L8.3 7.7 L.6 0 Z" fill="#7cb83c"/><path d="M0 .6 L7.7 8.3 L0 16 L-7.7 8.3 Z" fill="#fbc02d"/><path d="M-4 -11 L1 -14 L5 -10 Z" fill="#f47cbc" opacity=".7"/><path d="M-12 -2 L-8 -6 L-5 -3 Z" fill="#7cc4f0" opacity=".6"/><path d="M5 -3 L9 -6.5 L12 -3 Z" fill="#b4dc84" opacity=".6"/></g><text x="631" y="344.2" font-family="Liberation Serif,serif" font-style="italic" font-size="10" fill="#8a8a8a" stroke="#f4f4f4" stroke-width=".35" paint-order="stroke" textLength="51" lengthAdjust="spacingAndGlyphs">ColorpackHost</text></svg><div class="nm" style="text-indent:-1px">logo_colorpack.png</div></div>
<div class="a it" id="it13" style="left:267px;top:78px"><svg class="a" style="left:0;top:0" width="80" height="75" viewBox="705 297 80 75"><path d="M752 324 L741 351 L753 351 Z" fill="#d2d2d2"/><path d="M759 323 L753 351 L771 349 Q767 338 759 323 Z" fill="#cacaca"/><path d="M749 330 L738 352 L745 352 Z" fill="#e2e2e2"/><path d="M765 333 Q772 342 775 349 L768 350 Z" fill="#dcdcdc"/><path d="M739 353 L775 350 L773 354 L741 355 Z" fill="#e8e8e8"/><text x="715.3" y="356.3" font-family="Liberation Sans,sans-serif" font-style="italic" font-size="8" fill="#6c78af" textLength="14.2" lengthAdjust="spacingAndGlyphs">php</text><text x="729.3" y="356.5" font-family="Liberation Sans,sans-serif" font-style="italic" font-weight="bold" font-size="10.5" fill="#f89c0e" stroke="#f89c0e" stroke-width=".3" textLength="43" lengthAdjust="spacingAndGlyphs">MyAdmin</text></svg><div class="nm">logo_right.png</div></div>
<div class="a it" id="it14" style="left:355px;top:78px"><svg class="a" style="left:0;top:0" width="80" height="75" viewBox="793 297 80 75"><defs><linearGradient id="gbx" x1="0" y1="0" x2="0" y2="1"><stop offset="0" stop-color="#d9a84a"/><stop offset="1" stop-color="#b98a30"/></linearGradient></defs><rect x="824.3" y="320.6" width="10" height="24.5" fill="url(#gbx)"/><rect x="834" y="323.8" width="14.3" height="21.3" fill="url(#gbx)"/><rect x="824.3" y="320.6" width="10" height="1.2" fill="#e9c675"/><path d="M808 322.6 L813 324.5 L820.5 344.8 L850 344.8 L854 327 L816 327" fill="none" stroke="#c9c9c9" stroke-width="1.5"/><path d="M817.5 332.5 L853 332.5 M819.5 338.5 L851.5 338.5" stroke="#d4d4d4" stroke-width="1.3"/><path d="M821 345 L824 348.5 L849 348.5" fill="none" stroke="#bdbdbd" stroke-width="1.3"/><path d="M806 321.6 L811 323.6" stroke="#e01818" stroke-width="2.8" stroke-linecap="round"/><circle cx="828.6" cy="352.3" r="4.2" fill="#6e6e6e"/><circle cx="828.6" cy="352.3" r="2.2" fill="#dcdcdc"/><circle cx="828.6" cy="352.3" r=".9" fill="#555"/><circle cx="844" cy="352.3" r="4.2" fill="#6e6e6e"/><circle cx="844" cy="352.3" r="2.2" fill="#dcdcdc"/><circle cx="844" cy="352.3" r=".9" fill="#555"/><ellipse cx="836" cy="357" rx="16" ry="1.2" fill="#e4e4e4"/><text x="825.8" y="367.2" font-family="DejaVu Sans Condensed,DejaVu Sans,sans-serif" font-size="8.5" fill="#222" textLength="22.6" lengthAdjust="spacingAndGlyphs">Order</text></svg><div class="nm">order-icon.gif</div></div>
<div class="a it" id="it15" style="left:443px;top:78px"><svg class="a" style="left:0;top:0" width="80" height="75" viewBox="881 297 80 75"><defs><linearGradient id="gsc" x1="0" y1="0" x2="1" y2="0"><stop offset="0" stop-color="#8d7f62"/><stop offset=".45" stop-color="#d2c8b0"/><stop offset="1" stop-color="#96876a"/></linearGradient></defs><path d="M911 333.3 L934 332.8 L935 351.5 L911 353 Z" fill="#c2b9a0"/><path d="M914 336 L931 335.6 M914 338.5 L931 338.1 M914 341 L931 340.6 M914 343.5 L931 343.1 M914 346 L931 345.6 M914 348.5 L931 348.1" stroke="#8d8268" stroke-width=".9" opacity=".8"/><path d="M923.3 334 L924 351.5" stroke="#c9c0a8" stroke-width="1"/><path d="M911 352.5 L935 351" stroke="#8a7d60" stroke-width=".8"/><g transform="rotate(12 905 338)"><rect x="903" y="352" width="3" height="10.5" rx="1.3" fill="#b8902a"/><rect x="899.5" y="324" width="10.5" height="27" rx="3" fill="url(#gsc)"/><ellipse cx="904.7" cy="324.8" rx="5.2" ry="2" fill="#9a8a62"/><ellipse cx="904.7" cy="350.5" rx="7.3" ry="4.6" fill="#a9683c"/><ellipse cx="904.7" cy="349.8" rx="7.3" ry="4.2" fill="none" stroke="#b8902a" stroke-width="1"/><circle cx="902.5" cy="350.5" r="1.5" fill="#c23a2a" opacity=".8"/></g><g transform="rotate(-9 940 338)"><rect x="939.5" y="352" width="3" height="10.5" rx="1.3" fill="#b8902a"/><rect x="935" y="325" width="10.5" height="26" rx="3" fill="url(#gsc)"/><ellipse cx="940.2" cy="325.5" rx="6" ry="3" fill="#8a6c3c"/><ellipse cx="940.2" cy="350.5" rx="7.3" ry="4.6" fill="#a9683c"/><ellipse cx="940.2" cy="349.8" rx="7.3" ry="4.2" fill="none" stroke="#b8902a" stroke-width="1"/><circle cx="938" cy="350.5" r="1.5" fill="#c23a2a" opacity=".8"/></g></svg><div class="nm">pastarchives.jpg</div></div>
<div class="a it" id="it20" style="left:3px;top:176px"><div class="nm"></div></div>
<div class="a it" id="it21" style="left:91px;top:176px"><svg class="a" style="left:0;top:0" width="80" height="20" viewBox="529 395 80 20"><path d="M559.5 411.6 H576.5" stroke="#cfcfcf" stroke-width="1.2" stroke-dasharray="1.6 1.4"/></svg><div class="nm"></div></div>
<div class="a it" id="it22" style="left:179px;top:176px"><div class="nm"></div></div>
<div class="a it" id="it23" style="left:267px;top:176px"><div class="nm"></div></div>
<div class="a it" id="it24" style="left:355px;top:176px"><div class="nm"></div></div>
<div class="a it" id="it25" style="left:443px;top:176px"><div class="nm"></div></div>
<div class="a" id="sb" style="left:554px;top:0;width:16px;height:195px;background:#e9e7e3">
<svg class="a" style="left:0;top:0" width="16" height="195"><defs><pattern id="chk" width="2" height="2" patternUnits="userSpaceOnUse"><rect width="2" height="2" fill="#fff"/><rect width="1" height="1" fill="#d4d0c8"/><rect x="1" y="1" width="1" height="1" fill="#d4d0c8"/></pattern></defs><rect width="16" height="195" fill="url(#chk)"/></svg>
<div class="a sbb" style="left:0;top:0;width:16px;height:16px"><i class="up"></i></div>
<div class="a sbb" style="left:0;top:113px;width:16px;height:32px"></div>
<div class="a sbb" style="left:0;top:179px;width:16px;height:16px"><i class="dn"></i></div>
</div>
</div>
<div class="a fs" style="left:2px;top:244px;width:566px;height:77px"></div>
<div class="a" style="left:10px;top:255px;font-size:11px;color:#000;letter-spacing:-.45px">Image URL</div>
<div class="a" style="left:10px;top:275px;font-size:11px;color:#000;letter-spacing:-.2px">Image Description</div>
<div class="a" style="left:10px;top:297px;font-size:11px;color:#000;letter-spacing:-.2px">Title</div>
<div class="a inp tah" style="left:100px;top:253px;width:222px">images/stories/logo_colorpack.png</div>
<div class="a inp tah" style="left:100px;top:273px;width:222px">Colorpack Host</div>
<div class="a inp tah" style="left:100px;top:295px;width:222px;background:#ffffd6">Colorpack Host<span style="display:inline-block;width:1px;height:12px;background:#000;vertical-align:-2px"></span></div>
<div class="a" style="left:326px;top:255px;font-size:11px;color:#000">Align</div>
<div class="a tah" style="left:366px;top:253px;width:59px;height:16px;border:1px solid #aaa;background:#fff;line-height:15px;padding-left:4px">Not Set</div>
<div class="a cb" style="left:408px;top:254px;width:16px;height:14px"><i></i></div>
<div class="a" style="left:326px;top:297px;font-size:11px;color:#000;letter-spacing:-.15px">Caption</div>
<div class="a" style="left:370px;top:296px;width:13px;height:13px;border:1px solid #fff;border-top:2px solid #555;border-left:2px solid #555;border-right-color:#d4d0c8;border-bottom-color:#d4d0c8;background:#fff"></div>
<div class="a" style="left:0;top:361px;width:570px;height:38px;background:#efefef"></div>
<div class="a fs" style="left:2px;top:338px;width:566px;height:80px"></div>
<div class="a lg" style="left:6px;top:332px;height:14px;line-height:14px;letter-spacing:-.3px">Upload</div>
<div class="a fs" style="left:10px;top:351px;width:550px;height:31px"></div>
<div class="a" style="left:16px;top:357px;width:99px;height:18px;background:#fff;border:1px solid #d4d0c8;border-top:2px solid #555;border-left:2px solid #555"></div>
<div class="a tah wb" style="left:116px;top:357px;width:63px;height:19px;line-height:19px;text-align:center">Browse...</div>
<div class="a tah" style="left:181px;top:359px;width:77px;height:16px;line-height:16px;text-align:center;background:#d4d0c8;border:1px solid #e4e2dc">Start Upload</div>
</div>
<div id="cl" class="a"><svg class="a" style="left:0;top:0" width="18" height="18" viewBox="0 0 18 18"><path d="M5.6 5.6 L12.4 12.4 M12.4 5.6 L5.6 12.4" stroke="#fff" stroke-width="2.8" stroke-linecap="round"/></svg></div>
</body></html>
